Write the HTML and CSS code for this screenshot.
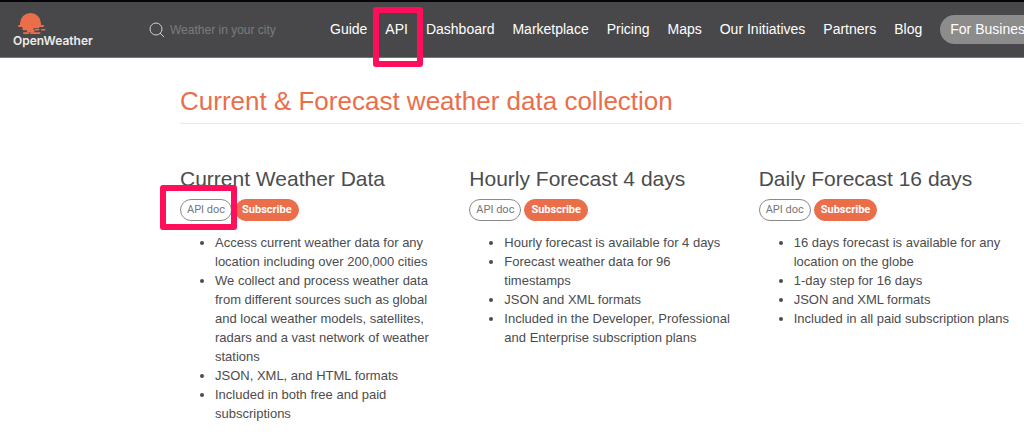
FILE: index.html
```html
<!DOCTYPE html>
<html lang="en">
<head>
    <meta charset="UTF-8">
    <meta name="viewport" content="width=device-width, initial-scale=1.0">
    <title>Weather API - OpenWeather</title>
    <link rel="stylesheet" href="styles.css">
</head>
<body>

<header class="site-header">
    <a href="#" class="logo">
        <svg class="logo-sun" viewBox="0 0 28 22" width="28" height="22" aria-hidden="true">
            <g fill="#eb6e4b">
                <path d="M2 12.5 V10.5 A10.5 10.5 0 0 1 23 10.5 V12.5 Z"/>
                <rect x="0" y="12" width="26" height="2" rx="1"/>
                <rect x="4.5" y="13.5" width="17" height="1.8" rx="0.8"/>
                <rect x="4.5" y="14" width="11" height="3.2" rx="0.8"/>
                <rect x="16.5" y="16" width="5" height="1.5" rx="0.7"/>
                <rect x="23" y="16" width="4.5" height="1.5" rx="0.7"/>
                <rect x="9" y="17" width="7.5" height="2.5"/>
                <rect x="5" y="19.3" width="6" height="1.7" rx="0.8"/>
                <rect x="12" y="19.3" width="10.5" height="1.7" rx="0.8"/>
            </g>
        </svg>
        <span class="logo-name">OpenWeather</span>
    </a>

    <form class="search">
        <svg viewBox="0 0 16 16" width="16" height="16" aria-hidden="true">
            <circle cx="7" cy="7" r="6" fill="none" stroke="#d0d0d0"/>
            <path d="M11 11 L15 15" stroke="#d0d0d0"/>
        </svg>
        <input type="text" placeholder="Weather in your city" aria-label="Weather in your city">
    </form>

    <nav class="main-nav">
        <a href="#">Guide</a>
        <a href="#" class="marked">API</a>
        <a href="#">Dashboard</a>
        <a href="#">Marketplace</a>
        <a href="#">Pricing</a>
        <a href="#">Maps</a>
        <a href="#">Our Initiatives</a>
        <a href="#">Partners</a>
        <a href="#">Blog</a>
        <a href="#" class="business">For Business</a>
    </nav>
</header>

<main class="content">
    <h1>Current &amp; Forecast weather data collection</h1>

    <div class="products">
        <section class="product">
            <h2>Current Weather Data</h2>
            <div class="actions">
                <a href="#" class="btn marked">API doc</a>
                <a href="#" class="btn btn-orange">Subscribe</a>
            </div>
            <ul>
                <li>Access current weather data for any location including over 200,000 cities</li>
                <li>We collect and process weather data from different sources such as global and local weather models, satellites, radars and a vast network of weather stations</li>
                <li>JSON, XML, and HTML formats</li>
                <li>Included in both free and paid subscriptions</li>
            </ul>
        </section>

        <section class="product">
            <h2>Hourly Forecast 4 days</h2>
            <div class="actions">
                <a href="#" class="btn">API doc</a>
                <a href="#" class="btn btn-orange">Subscribe</a>
            </div>
            <ul>
                <li>Hourly forecast is available for 4 days</li>
                <li>Forecast weather data for 96 timestamps</li>
                <li>JSON and XML formats</li>
                <li>Included in the Developer, Professional and Enterprise subscription plans</li>
            </ul>
        </section>

        <section class="product">
            <h2>Daily Forecast 16 days</h2>
            <div class="actions">
                <a href="#" class="btn">API doc</a>
                <a href="#" class="btn btn-orange">Subscribe</a>
            </div>
            <ul>
                <li>16 days forecast is available for any location on the globe</li>
                <li>1-day step for 16 days</li>
                <li>JSON and XML formats</li>
                <li>Included in all paid subscription plans</li>
            </ul>
        </section>
    </div>
</main>

</body>
</html>
```
FILE: styles.css
```css
* {
    box-sizing: border-box;
}
body {
    margin: 0;
    font-family: "Liberation Sans", Arial, sans-serif;
    font-size: 13px;
    line-height: 19px;
    color: #4c4c4e;
    background-color: #fff;
    overflow-x: hidden;
}
a {
    text-decoration: none;
}

/* header */
.site-header {
    display: flex;
    align-items: center;
    height: 58px;
    padding-left: 13px;
    border-top: 2px solid #060608;
    border-bottom: 1px solid #77777a;
    background-color: #48484a;
}
.logo {
    flex: 0 0 136px;
    color: #ececec;
}
.logo-sun {
    display: block;
    margin-left: 5px;
}
.logo-name {
    display: block;
    font-family: Inter, sans-serif;
    font-size: 12px;
    font-weight: 600;
    line-height: 12px;
}
.search {
    display: flex;
    align-items: center;
    gap: 5px;
    flex: 0 0 181px;
}
.search input {
    width: 140px;
    padding: 0;
    border: none;
    outline: none;
    background: none;
    font-family: inherit;
    font-size: 12px;
}
.search input::placeholder {
    color: #7b7b7d;
    opacity: 1;
}
.main-nav {
    display: flex;
    align-items: center;
    gap: 18px;
    white-space: nowrap;
}
.main-nav a {
    color: #fff;
    font-size: 14px;
    line-height: 29px;
}
.main-nav .business {
    padding: 0 10px;
    border-radius: 15px;
    background-color: #8c8c8d;
}

/* pink frames round the highlighted links */
.marked {
    position: relative;
}
.marked::after {
    content: "";
    position: absolute;
    border: 6px solid #ff0f5b;
    border-radius: 3px;
}
.main-nav .marked::after {
    inset: -8px -15px -23px -12px;
}
.btn.marked::after {
    inset: -15px -6px -10px -21px;
}

/* content */
.content {
    padding: 27px 2px 20px 180px;
}
h1 {
    margin: 0 0 43px;
    padding-bottom: 6px;
    border-bottom: 1px solid #e8e8e8;
    color: #eb6e4b;
    font-size: 26px;
    font-weight: normal;
    line-height: 32px;
}
.products {
    display: grid;
    grid-template-columns: repeat(3, 1fr);
    gap: 26px;
}
h2 {
    margin: 0 0 8px;
    font-size: 21px;
    font-weight: normal;
    line-height: 24px;
}
.actions {
    display: flex;
    gap: 3px;
    margin-bottom: 12px;
}
.btn {
    padding: 0 6px;
    border: 1px solid #8a8a8c;
    border-radius: 11px;
    color: #76767a;
    font-family: Roboto, sans-serif;
    font-size: 11px;
    line-height: 20px;
}
.btn-orange {
    border-color: #eb6e4b;
    background-color: #eb6e4b;
    color: #fff;
    font-weight: bold;
}
.product ul {
    margin: 0;
    padding-left: 35px;
}
```
